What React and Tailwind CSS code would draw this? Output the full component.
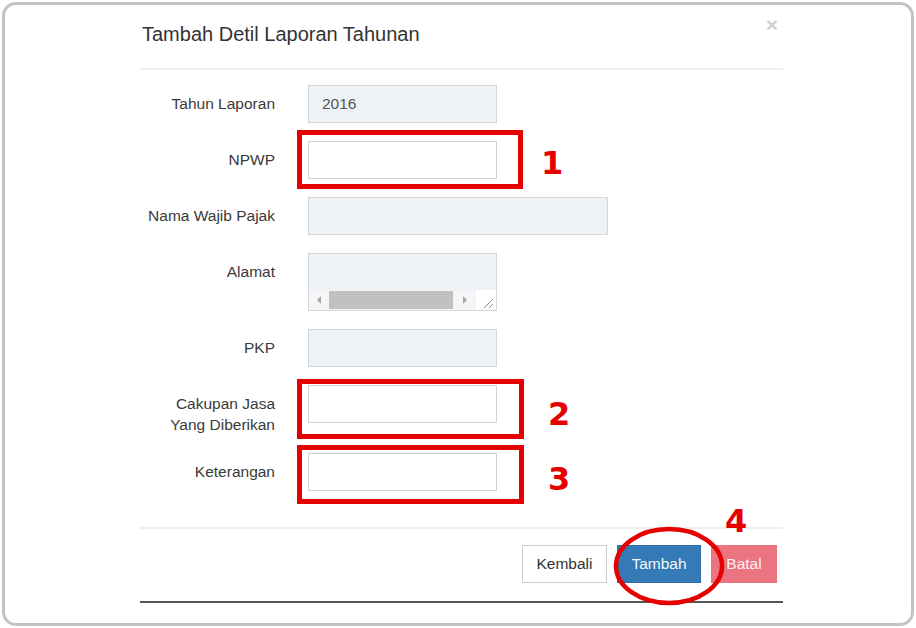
const inputBase = "h-[38px] border px-[13px] text-[15.5px] leading-[36px] text-[#555]";
const disabled = "border-[#d3d7de] bg-[#eef1f6]";
const enabled = "border-[#cfd3d8] bg-white";

function Row({ label, children }) {
  return (
    <div className="flex items-start">
      <label className="w-[135px] shrink-0 pt-[8px] text-right text-[15.5px] leading-[21px] text-[#3a3a3a]">
        {label}
      </label>
      <div className="relative ml-[33px]">{children}</div>
    </div>
  );
}

// red annotation rectangle + number drawn over a field
function Mark({ box, num, numPos }) {
  return (
    <>
      <div className={`pointer-events-none absolute border-[5px] border-[#e60000] ${box}`} />
      <span
        className={`absolute font-['DejaVu_Sans',sans-serif] text-[32px] font-bold leading-[32px] text-[#e60000] ${numPos}`}
      >
        {num}
      </span>
    </>
  );
}

function Textarea() {
  return (
    <div className={`flex h-[58px] w-[189px] flex-col border ${disabled}`}>
      <div className="flex-1" />
      <div className="flex h-[20px] items-stretch bg-[#f4f5f7]">
        <div className="flex w-[20px] items-center justify-center">
          <span className="h-0 w-0 border-y-[4px] border-r-[4px] border-y-transparent border-r-[#a6a6a6]" />
        </div>
        <div className="my-[1px] w-[124px] bg-[#c1c1c1]" />
        <div className="flex w-[23px] items-center justify-center">
          <span className="h-0 w-0 border-y-[4px] border-l-[4px] border-y-transparent border-l-[#a6a6a6]" />
        </div>
        <div className="flex-1 bg-white">
          <svg width="19" height="20" viewBox="0 0 19 20">
            <path d="M17 9 L8 18 M17 14 L13 18" stroke="#8a8a8a" strokeWidth="1" fill="none" />
          </svg>
        </div>
      </div>
    </div>
  );
}

export default function App() {
  return (
    <div className="h-[628px] w-[916px] bg-white p-[2px] font-['Liberation_Sans',Arial,sans-serif]">
      <div className="h-full rounded-[14px] border-[3px] border-[#c3c3c3] bg-white">
        <div className="ml-[135px] w-[643px]">
          <header className="flex items-start justify-between border-b-2 border-[#f0f0f0] pb-[20px] pl-[2px] pr-[5px] pt-[15px]">
            <h4 className="text-[20px] leading-[28px] text-[#333]">Tambah Detil Laporan Tahunan</h4>
            <span className="-mt-[6px] text-[21px] font-bold leading-[21px] text-[#d0d0d0]">×</span>
          </header>

          <div className="flex flex-col gap-[18px] pb-[36px] pt-[15px]">
            <Row label="Tahun Laporan">
              <div className={`${inputBase} ${disabled} w-[189px]`}>2016</div>
            </Row>
            <Row label="NPWP">
              <div className={`${inputBase} ${enabled} w-[189px]`} />
              <Mark box="-left-[11px] -top-[11px] h-[59px] w-[226px]" num="1" numPos="left-[233px] top-[6px]" />
            </Row>
            <Row label="Nama Wajib Pajak">
              <div className={`${inputBase} ${disabled} w-[300px]`} />
            </Row>
            <Row label="Alamat">
              <Textarea />
            </Row>
            <Row label="PKP">
              <div className={`${inputBase} ${disabled} w-[189px]`} />
            </Row>
            <Row
              label={
                <>
                  Cakupan Jasa
                  <br />
                  Yang Diberikan
                </>
              }
            >
              <div className={`${inputBase} ${enabled} w-[189px]`} />
              <Mark box="-left-[11px] -top-[6px] h-[60px] w-[227px]" num="2" numPos="left-[240px] top-[13px]" />
            </Row>
            <Row label="Keterangan">
              <div className={`${inputBase} ${enabled} w-[189px]`} />
              <Mark box="-left-[11px] -top-[8px] h-[59px] w-[227px]" num="3" numPos="left-[240px] top-[10px]" />
            </Row>
          </div>

          <footer className="relative flex justify-end gap-[10px] border-b-2 border-t-2 border-b-[#555] border-t-[#eeeeee] pb-[18px] pr-[6px] pt-[16px]">
            <button className="h-[38px] w-[85px] border border-[#ccc] bg-white text-[15.5px] text-[#333]">Kembali</button>
            <button className="h-[38px] w-[84px] border border-[#2e6da4] bg-[#337ab7] text-[15.5px] text-[#f2f6fb]">Tambah</button>
            <button className="h-[38px] w-[66px] bg-[#ea7480] text-[15.5px] text-[#fdf0f1]">Batal</button>

            <span className="absolute left-[585px] -top-[24px] font-['DejaVu_Sans',sans-serif] text-[32px] font-bold leading-[32px] text-[#e60000]">
              4
            </span>
            <svg className="pointer-events-none absolute left-[473px] -top-[3px]" width="112" height="80" viewBox="0 0 112 80">
              <ellipse cx="56" cy="40" rx="53" ry="37" fill="none" stroke="#e60000" strokeWidth="4.5" />
            </svg>
          </footer>
        </div>
      </div>
    </div>
  );
}
